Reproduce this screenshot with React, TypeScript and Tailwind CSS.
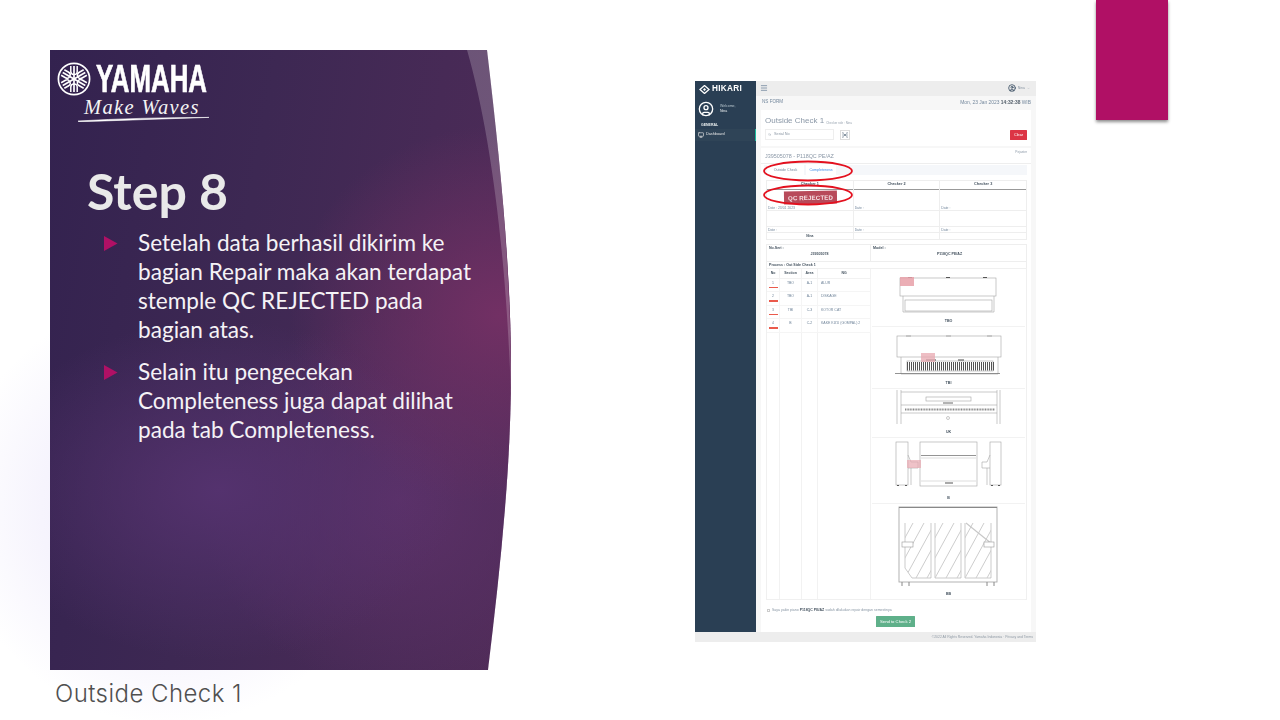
import React from "react";
import { Menu, Monitor, ChevronDown, CircleUser, Search } from "lucide-react";

const s = { stroke: "#a4a4a4", strokeWidth: 0.6, fill: "none" };

function Emblem() {
  const fork = (
    <g>
      <path d="M0 -13 V13" stroke="#fff" strokeWidth="1.7" />
      <path d="M-3.2 -13 V-7.5 Q-3.2 -4.5 0 -4.5 Q3.2 -4.5 3.2 -7.5 V-13" stroke="#fff" strokeWidth="1.5" fill="none" />
      <path d="M-3.2 13 V8 Q-3.2 5 0 5 Q3.2 5 3.2 8 V13" stroke="#fff" strokeWidth="1.5" fill="none" />
    </g>
  );
  return (
    <svg width="34" height="34" viewBox="-17 -17 34 34" className="shrink-0">
      <circle r="15.6" stroke="#fff" strokeWidth="1.7" fill="none" />
      {fork}
      <g transform="rotate(60)">{fork}</g>
      <g transform="rotate(120)">{fork}</g>
    </svg>
  );
}

function Logo() {
  return (
    <div className="pl-[7px] pt-[12px] h-[113px] text-white">
      <div className="flex items-center h-[34px] gap-[5px]">
        <Emblem />
        <span className="inline-block w-[112px] origin-left scale-x-[0.68] font-['Liberation_Sans',sans-serif] font-bold text-[38px] leading-[34px] [-webkit-text-stroke:0.7px_white]">
          YAMAHA
        </span>
      </div>
      <div className="pl-[27px] mt-[2px] h-[18px] font-['Liberation_Serif',serif] italic text-[20.5px] leading-[18px] tracking-[1.35px] text-[#f4f4f4]">
        Make Waves
      </div>
      <svg width="132" height="6" viewBox="0 0 132 6" className="ml-[21px] block">
        <path d="M0 5 Q60 1.5 131 1.4 Q70 3.4 1 5.8 Z" fill="#fff" stroke="#fff" strokeWidth="0.6" />
      </svg>
    </div>
  );
}

function Bullet({ children }: { children: React.ReactNode }) {
  return (
    <div className="flex">
      <svg width="14" height="15" viewBox="0 0 14 15" className="mt-[8px] ml-[54px] mr-[20px] shrink-0">
        <path d="M0 0 L13.5 7.5 L0 15 Z" fill="#b01065" />
      </svg>
      <p className="m-0 text-[22.6px] leading-[29px] text-[#f5f2f6] font-['Lato',sans-serif]">{children}</p>
    </div>
  );
}

function Slide() {
  return (
    <div className="w-[461px] shrink-0 flex flex-col">
      <div className="relative h-[620px] w-[461px] shrink-0 overflow-hidden [clip-path:path('M0_0H437C450_110_461_220_461_320C461_420_450_520_438_620H0Z')] bg-[radial-gradient(ellipse_210px_190px_at_450px_265px,#723064_0%,rgba(114,48,100,0)_100%),radial-gradient(ellipse_240px_170px_at_170px_440px,#54326e_0%,rgba(84,50,110,0)_100%),radial-gradient(ellipse_200px_190px_at_350px_450px,#5c3168_0%,rgba(92,49,104,0)_100%),linear-gradient(100deg,#33224f_0%,#3d2853_40%,#512c59_100%)]">
        <div className="absolute inset-0 bg-white/20 [clip-path:path('M417_0H438C450_110_461_220_461_345C456_200_440_80_417_0Z')]" />
        <div className="relative">
          <Logo />
          <h1 className="m-0 pl-[37px] h-[65px] text-[50px] leading-[56px] font-bold text-[#e9e9e9] font-['Lato',sans-serif]">Step 8</h1>
          <div className="flex flex-col gap-[13px]">
            <Bullet>
              Setelah data berhasil dikirim ke<br />bagian Repair maka akan terdapat<br />stemple QC REJECTED pada<br />bagian atas.
            </Bullet>
            <Bullet>
              Selain itu pengecekan<br />Completeness juga dapat dilihat<br />pada tab Completeness.
            </Bullet>
          </div>
        </div>
      </div>
      <div className="pl-[5px] pt-[9px] h-[40px] text-[#505050] text-[24px] leading-[30px] tracking-[0.45px] font-light font-['Inter',sans-serif]">Outside Check 1</div>
    </div>
  );
}

function MiniSidebar() {
  return (
    <div className="w-[61px] shrink-0 bg-[#2a3f54] text-[#ecf0f1] flex flex-col">
      <div className="h-[16px] flex items-center pl-[4px] gap-[2px]">
        <svg width="11" height="9" viewBox="0 0 11 9"><path d="M5.5 0.5 L10 4.5 L5.5 8.5 L1 4.5 Z" fill="none" stroke="#fff" strokeWidth="1.3" /><path d="M5.5 3 L7 4.5 L5.5 6 L4 4.5 Z" fill="#fff" /></svg>
        <span className="text-[8.2px] leading-none font-bold tracking-[0.3px] text-white">HIKARI</span>
      </div>
      <div className="h-[24px] flex items-center pl-[3px] gap-[6px]">
        <CircleUser size={16} strokeWidth={2} className="text-white" />
        <div className="text-[3.5px] leading-[5.5px] text-[#b8c7ce]">Welcome,<br /><span className="text-[#ecf0f1]">Nina</span></div>
      </div>
      <div className="h-[8px] pl-[6px] text-[3.5px] leading-[8px] font-bold text-[#ecf0f1]">GENERAL</div>
      <div className="h-[12px] bg-[#2f4457] border-r-[1.5px] border-[#1abb9c] flex items-center pl-[3px] gap-[2px] text-[3.8px] text-[#e7e7e7]">
        <Monitor size={6} strokeWidth={2.5} />Dashboard
      </div>
    </div>
  );
}

function CheckerCol({ name, date, sign, stamp, last }: { name: string; date: string; sign?: string; stamp?: boolean; last?: boolean }) {
  return (
    <div className={`flex-1 flex flex-col text-[3.4px] text-[#73879c] ${last ? "" : "border-r border-[#eeeeee]"}`}>
      <div className="h-[9px] flex items-center justify-center font-bold text-[#44525f] border-b-[1.5px] border-[#999999] text-[3.8px]">{name}</div>
      <div className="h-[16px] relative">
        {stamp && (
          <div className="absolute left-[17px] top-[1px] w-[53px] h-[13px] -rotate-1 bg-[#b84a5a] text-[#f5dfe2] font-bold text-[6.2px] leading-[13px] text-center tracking-[0.1px]">
            QC REJECTED
          </div>
        )}
      </div>
      <div className="h-[6px] border-b border-[#eeeeee] pl-[1px] leading-[6px]">{date}</div>
      <div className="h-[16px] border-b border-[#eeeeee]" />
      <div className="h-[6px] border-b border-[#eeeeee] pl-[1px] leading-[6px]">Date :</div>
      <div className="h-[6px] text-center leading-[6px] font-bold text-[#44525f]">{sign}</div>
    </div>
  );
}

const rows = [
  ["1", "TBO", "A-1", "ALUR"],
  ["2", "TBO", "A-1", "DISKAGE"],
  ["3", "TBI", "C-3", "KOTOR CAT"],
  ["4", "B", "C-2", "KAKE KIZU (GOMPAL) 2"],
];

function DefectTable() {
  return (
    <div className="w-[104px] shrink-0 border-r border-[#eeeeee] grid grid-cols-[13px_22px_16px_53px] grid-rows-[10px_13.5px_13.5px_13.5px_13.5px_1fr] text-[3.5px] text-[#73879c]">
      {["No", "Section", "Area", "NG"].map((h) => (
        <div key={h} className="flex items-center justify-center font-bold text-[#44525f] border-r border-b border-[#f2f2f2]">{h}</div>
      ))}
      {rows.map((r) => (
        <React.Fragment key={r[0]}>
          <div className="border-r border-b border-[#f5f5f5] flex flex-col items-center pt-[2px]">
            <span className="leading-[4px] h-[6px]">{r[0]}</span>
            <span className="block w-[9px] h-[1.5px] bg-[#ea5a4c]" />
          </div>
          <div className="border-r border-b border-[#f5f5f5] text-center pt-[2px] leading-[4px]">{r[1]}</div>
          <div className="border-r border-b border-[#f5f5f5] text-center pt-[2px] leading-[4px]">{r[2]}</div>
          <div className="border-r border-b border-[#f5f5f5] pl-[3px] pt-[2px] leading-[4px] whitespace-nowrap">{r[3]}</div>
        </React.Fragment>
      ))}
      <div className="border-r border-[#f2f2f2]" />
      <div className="border-r border-[#f2f2f2]" />
      <div className="border-r border-[#f2f2f2]" />
      <div className="border-r border-[#f2f2f2]" />
    </div>
  );
}

function Drawing({ y0, h, label, children }: { y0: number; h: number; label: string; children: React.ReactNode }) {
  return (
    <div className="border-b border-[#f2f2f2] mx-[1px]">
      <svg width="153" height={h} viewBox={`872 ${y0} 153 ${h}`} className="block">{children}</svg>
      <div className="h-[10px] leading-[10px] text-center text-[3.6px] font-bold text-[#44525f]">{label}</div>
    </div>
  );
}

function Pianos() {
  const keys = Array.from({ length: 44 }, (_, i) => 907.5 + i * 2);
  const hatch = (x0: number, id: string) => (
    <g key={id}>
      {[0, 1, 2, 3, 4, 5].map((i) => (
        <path key={i} d={`M${x0 + (i - 2) * 11} 578 L${x0 + (i - 2) * 11 + 30} 523`} stroke="#cdcdcd" strokeWidth="1" />
      ))}
    </g>
  );
  return (
    <div className="flex-1 min-w-0 flex flex-col">
      <Drawing y0={268} h={47} label="TBO">
        <rect x="900" y="277" width="96" height="18" {...s} />
        <path d="M903 295 V311 H994 V295" {...s} />
        <rect x="905" y="299" width="87" height="11" {...s} />
        <path d="M908 276.5 H912 M946 276.5 H950 M983 276.5 H987" stroke="#555" strokeWidth="1" />
        <rect x="900" y="276" width="14" height="9" fill="#e8a0a8" opacity="0.85" />
      </Drawing>
      <Drawing y0={326} h={51} label="TBI">
        <rect x="897" y="335" width="104" height="21" {...s} />
        <path d="M901 356 V373 H998 V356" {...s} />
        <path d="M895 372.5 H1000" stroke="#777" strokeWidth="0.8" />
        <rect x="907" y="360" width="86" height="10" {...s} />
        {keys.map((x) => (
          <path key={x} d={`M${x} 361 V369.5`} stroke="#555" strokeWidth="1" />
        ))}
        <path d="M906 335 H911 M946 335 H951 M987 335 H992" stroke="#999" strokeWidth="0.8" />
        <path d="M926 359 H936 M958 359 H964" stroke="#444" strokeWidth="1" />
        <rect x="921" y="352" width="14" height="9" fill="#e8a8b0" opacity="0.75" />
      </Drawing>
      <Drawing y0={389} h={38} label="UK">
        <path d="M897 390 V424 M901 390 V424 M997 390 V424 M1000 390 V424 M901 392 H997 M901 405 H997 M901 413 H997" {...s} />
        <rect x="926" y="397" width="45" height="4" {...s} />
        <path d="M943 403 H953" stroke="#666" strokeWidth="1" />
        <path d="M905 409.5 H995" stroke="#888" strokeWidth="2" strokeDasharray="1 0.6" />
        <circle cx="948" cy="418" r="1.5" {...s} />
      </Drawing>
      <Drawing y0={438} h={55} label="B">
        <rect x="896" y="442" width="12" height="43" {...s} />
        <rect x="990" y="442" width="11" height="43" {...s} />
        <path d="M908 455 L911 462 H918 V468 H908 M990 455 L987 462 H982 V468 H990 M911 468 V485 M987 468 V485" {...s} />
        <rect x="920" y="442" width="57" height="44" {...s} />
        <path d="M921 455.5 H976" stroke="#888" strokeWidth="0.9" />
        <path d="M921 458 H976 M921 481 H976" stroke="#bbb" strokeWidth="0.5" />
        <path d="M897 485.5 H899 M905 485.5 H907 M991 485.5 H993 M998 485.5 H1000 M945 483 H953" stroke="#555" strokeWidth="1.2" />
        <rect x="907" y="460" width="14" height="8" fill="#e8a8b0" opacity="0.7" />
      </Drawing>
      <Drawing y0={504} h={85} label="BB">
        <rect x="899" y="507" width="98" height="75" fill="none" stroke="#aaa" strokeWidth="0.9" />
        <path d="M899 507.5 H997" stroke="#888" strokeWidth="1.2" />
        <path d="M905 523 V568 L912 578 H931 V523 M935 523 V578 H961 V523 M965 523 V578 H991 V523" fill="none" stroke="#aaa" strokeWidth="0.6" />
        <clipPath id="p1"><path d="M905 523 V568 L912 578 H931 V523 Z" /></clipPath>
        <clipPath id="p2"><rect x="935" y="523" width="26" height="55" /></clipPath>
        <clipPath id="p3"><rect x="965" y="523" width="26" height="55" /></clipPath>
        <g clipPath="url(#p1)">{hatch(905, "a")}</g>
        <g clipPath="url(#p2)">{hatch(935, "b")}</g>
        <g clipPath="url(#p3)">{hatch(965, "c")}</g>
        <path d="M966 523 L992 544" stroke="#c8c8c8" strokeWidth="1.2" />
        <rect x="902" y="542" width="11" height="5" fill="#fff" stroke="#999" strokeWidth="0.6" />
        <rect x="984" y="542" width="10" height="5" fill="#fff" stroke="#999" strokeWidth="0.6" />
        <path d="M902 582 V586 M909 582 V586 M987 582 V586 M994 582 V586" stroke="#888" strokeWidth="1" />
      </Drawing>
    </div>
  );
}

function Screenshot() {
  return (
    <div className="relative w-[341px] h-[561px] mt-[81px] shrink-0 flex flex-col bg-[#f7f7f7] blur-[0.7px] overflow-hidden font-['Liberation_Sans',sans-serif]">
      <div className="h-[551px] flex">
        <MiniSidebar />
        <div className="w-[280px] min-w-0 flex flex-col">
          <div className="h-[15px] bg-[#ededed] flex items-center justify-between pl-[4px] pr-[6px] text-[#5a738e]">
            <Menu size={8} strokeWidth={2} />
            <div className="flex items-center gap-[2px] text-[3.5px] text-[#8a96a3]">
              <CircleUser size={8} strokeWidth={2.4} className="text-[#34495e]" />Nina<ChevronDown size={3} />
            </div>
          </div>
          <div className="h-[14px] flex items-center justify-between pl-[6px] pr-[5px] text-[#73879c]">
            <span className="text-[4.6px]">NS FORM</span>
            <span className="text-[4.9px]">Mon, 23 Jan 2023 <b className="text-[#55606b]">14:32:38</b> WIB</span>
          </div>
          <div className="h-[36px] ml-[5px] mr-[5px] bg-white px-[4px] pt-[3px]">
            <div className="h-[14px] flex items-end pb-[1px] gap-[2px] text-[#8b98a7]">
              <span className="text-[8px] leading-[11px]">Outside Check 1</span>
              <span className="text-[3px] leading-[6px] text-[#9aa5b1]">Checker role : Nina</span>
            </div>
            <div className="flex items-center h-[12px] mt-[2px]">
              <div className="w-[69px] h-[11px] border border-[#eeeeee] flex items-center pl-[2px] gap-[3px] text-[3.8px] text-[#8a96a3]">
                <Search size={3} />Serial No
              </div>
              <svg width="10" height="10" viewBox="0 0 10 10" className="ml-[6px] border border-[#dddddd]">
                <path d="M2 3 V2 H3 M7 2 H8 V3 M8 7 V8 H7 M3 8 H2 V7 M3 3 L7 7 M7 3 L3 7 M1.5 5 H8.5" fill="none" stroke="#70808f" strokeWidth="0.9" />
              </svg>
              <div className="ml-auto mr-[0px] w-[17px] h-[10px] bg-[#dc3545] text-white text-[3.8px] leading-[10px] text-center rounded-[0.5px]">Clear</div>
            </div>
          </div>
          <div className="h-[486px] ml-[5px] mr-[5px] mt-[2px] bg-white flex flex-col">
            <div className="h-[16px] shrink-0 border-b border-[#eeeeee] px-[4px] flex justify-between text-[#8b98a7]">
              <span className="text-[5.4px] leading-[16px]">J39505078 - P118QC PE/AZ</span>
              <span className="text-[3.2px] leading-[8px]">Pejaster</span>
            </div>
            <div className="h-[10px] shrink-0 ml-[3px] mr-[4px] mt-[1px] bg-[#f5f7fa] flex text-[3.6px] pl-[3px] leading-[10px]">
              <div className="w-[37px] bg-white text-center text-[#73879c]">Outside Check</div>
              <div className="w-[30px] ml-[2px] bg-white text-center text-[#3f8ee8]">Completeness</div>
            </div>
            <div className="ml-[5px] mr-[4px] mt-[5px] h-[60px] shrink-0 flex border border-[#eeeeee]">
              <CheckerCol name="Checker 1" date="Date :      23/01 2023" sign="Nina" stamp />
              <CheckerCol name="Checker 2" date="Date :" />
              <CheckerCol name="Checker 3" date="Date :" last />
            </div>
            <div className="ml-[5px] mr-[4px] mt-[4px] h-[18px] shrink-0 flex border border-[#eeeeee] text-[3.6px] text-[#44525f] font-bold">
              <div className="w-[104px] border-r border-[#eeeeee] pl-[2px] pt-[1px]">No.Seri :<div className="text-center mt-[1px]">J39505078</div></div>
              <div className="flex-1 pl-[2px] pt-[1px]">Model :<div className="text-center mt-[1px]">P118QC PE/AZ</div></div>
            </div>
            <div className="ml-[5px] mr-[4px] h-[6px] shrink-0 border-x border-[#eeeeee] pl-[2px] text-[3.6px] leading-[6px] font-bold text-[#44525f]">Process : Out Side Check 1</div>
            <div className="ml-[5px] mr-[4px] h-[332px] shrink-0 flex border border-[#f0f0f0]">
              <DefectTable />
              <Pianos />
            </div>
            <div className="flex items-center gap-[2px] pl-[6px] mt-[8px] h-[5px] shrink-0 text-[3.5px] text-[#8795a3] whitespace-nowrap">
              <span className="block w-[3px] h-[3px] border-[0.5px] border-[#cccccc]" />
              <span>Saya yakin piano <b className="text-[#44525f]">P118QC PE/AZ</b> sudah dilakukan repair dengan semestinya</span>
            </div>
            <div className="mt-[3px] ml-[115px] w-[39px] h-[11px] shrink-0 rounded-[0.5px] bg-[#5fb08a] text-white text-[4.2px] leading-[11px] text-center">Send to Check 2</div>
          </div>
        </div>
      </div>
      <div className="h-[10px] bg-[#ededed] text-[3.4px] leading-[10px] text-right pr-[3px] text-[#8f9aa5]">©2022 All Rights Reserved. Yamaha Indonesia · Privacy and Terms</div>
      <svg width="341" height="561" viewBox="695 81 341 561" className="absolute inset-0 pointer-events-none">
        <ellipse cx="808" cy="171" rx="44" ry="9.5" fill="none" stroke="#e3101e" strokeWidth="1.8" />
        <ellipse cx="808" cy="195" rx="44" ry="9.5" fill="none" stroke="#e3101e" strokeWidth="1.8" />
      </svg>
    </div>
  );
}

export default function App() {
  return (
    <div className="w-[1280px] h-[720px] overflow-hidden flex items-start bg-[radial-gradient(circle_215px_at_170px_510px,#ece7fb_0%,#f6f4fd_60%,#ffffff_100%)]">
      <div className="ml-[50px] mt-[50px]">
        <Slide />
      </div>
      <div className="ml-[184px] flex items-start">
        <Screenshot />
        <div className="ml-[60px] w-[72px] h-[120px] bg-[#b01065] shadow-[0_2px_3px_rgba(0,0,0,0.45)]" />
      </div>
    </div>
  );
}
